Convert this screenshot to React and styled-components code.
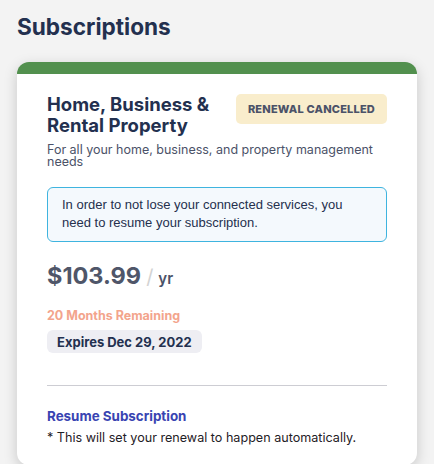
import React from "react";
import styled, { createGlobalStyle } from "styled-components";

const GlobalStyle = createGlobalStyle`
  html, body {
    margin: 0;
    padding: 0;
    background: #f3f3f3;
  }
  body {
    font-family: Inter, "Noto Sans", sans-serif;
  }
`;

const Page = styled.div`
  padding: 12px 17px 0;
  height: 464px;
  box-sizing: border-box;
  overflow: hidden;
`;

const Heading = styled.h1`
  margin: 0;
  font-size: 22.6px;
  font-weight: 700;
  color: #23304f;
  line-height: 30px;
`;

const Card = styled.div`
  margin-top: 20px;
  width: 400px;
  background: #fff;
  border-radius: 12px;
  border-top: 12px solid #52904e;
  box-shadow: 0 4px 14px rgba(0, 0, 0, 0.18);
  padding: 20px 30px 20px;
  box-sizing: border-box;
`;

const TopRow = styled.div`
  display: flex;
  justify-content: space-between;
  align-items: flex-start;
`;

const Title = styled.h2`
  margin: 0;
  font-size: 18.5px;
  font-weight: 700;
  line-height: 21px;
  color: #23304f;
  width: 180px;
`;

const Badge = styled.span`
  background: #f9edcc;
  color: #4b5268;
  font-size: 11px;
  font-weight: 800;
  letter-spacing: 0.2px;
  padding: 8px 12px;
  border-radius: 5px;
  text-transform: uppercase;
`;

const Desc = styled.p`
  margin: 8px 0 0;
  font-size: 12.5px;
  line-height: 12px;
  color: #4b5268;
`;

const Notice = styled.div`
  margin-top: 19px;
  border: 1px solid #3fb4df;
  background: #f4f9fd;
  border-radius: 6px;
  padding: 8px 14px 9px;
  font-family: "Liberation Sans", Arial, sans-serif;
  font-size: 13px;
  line-height: 18px;
  color: #24304d;
`;

const Price = styled.div`
  margin-top: 19px;
  display: flex;
  align-items: baseline;
  gap: 5px;
  color: #4f5669;
`;

const Amount = styled.span`
  font-size: 23.5px;
  font-weight: 700;
`;

const Slash = styled.span`
  font-size: 20px;
  color: #d3d3d3;
`;

const Period = styled.span`
  font-size: 15px;
  font-weight: 600;
  color: #4b5268;
`;

const Remaining = styled.div`
  margin-top: 18px;
  font-size: 12.5px;
  font-weight: 700;
  color: #f3a48c;
`;

const Chip = styled.div`
  display: inline-block;
  margin-top: 7px;
  background: #eeeef3;
  border-radius: 6px;
  padding: 4px 10px 3px;
  font-size: 13px;
  font-weight: 700;
  line-height: 16px;
  color: #23304f;
`;

const Divider = styled.hr`
  margin: 32px 0 0;
  border: 0;
  border-top: 1px solid #cdcdd3;
`;

const Resume = styled.a`
  display: block;
  margin-top: 22px;
  font-size: 13.4px;
  font-weight: 700;
  color: #3944b2;
  text-decoration: none;
`;

const Note = styled.p`
  margin: 6px 0 0;
  font-size: 12.6px;
  color: #1f2126;
`;

export default function App() {
  return (
    <>
      <GlobalStyle />
      <Page>
        <Heading>Subscriptions</Heading>
        <Card>
          <TopRow>
            <Title>Home, Business &amp; Rental Property</Title>
            <Badge>Renewal Cancelled</Badge>
          </TopRow>
          <Desc>For all your home, business, and property management needs</Desc>
          <Notice>
            In order to not lose your connected services, you need to resume your subscription.
          </Notice>
          <Price>
            <Amount>$103.99</Amount>
            <Slash>/</Slash>
            <Period>yr</Period>
          </Price>
          <Remaining>20 Months Remaining</Remaining>
          <Chip>Expires Dec 29, 2022</Chip>
          <Divider />
          <Resume href="#">Resume Subscription</Resume>
          <Note>* This will set your renewal to happen automatically.</Note>
        </Card>
      </Page>
    </>
  );
}
